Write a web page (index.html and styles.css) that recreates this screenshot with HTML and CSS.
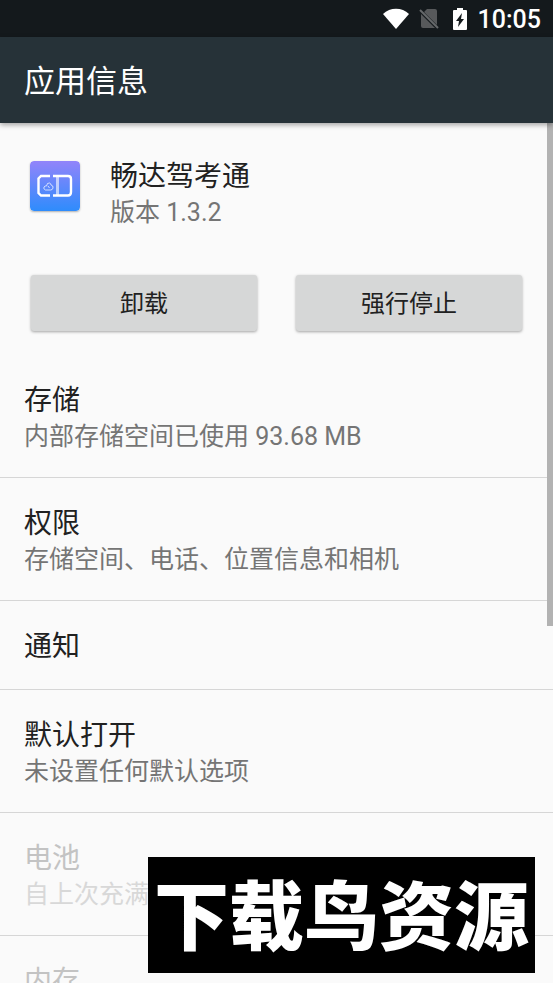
FILE: index.html
```html
<!DOCTYPE html>
<html lang="zh-CN">
<head>
<meta charset="utf-8">
<meta name="viewport" content="width=device-width, initial-scale=1">
<title>应用信息</title>
<link rel="stylesheet" href="styles.css">
</head>
<body>
<div class="statusbar">
  <svg class="wifi" viewBox="0 0 28 22" aria-hidden="true"><path d="M1 6C8-1 20-1 27 6L14 21Z" fill="#fff"/></svg>
  <svg class="sim" viewBox="0 0 22 22" aria-hidden="true"><path d="M9 1H17Q19 1 19 3V17L6 4ZM3 6L17 20H5Q3 20 3 18Z" fill="#57595b"/><path d="M2 2L20 20" stroke="#66696b" stroke-width="2"/></svg>
  <svg class="battery" viewBox="0 0 16 22" aria-hidden="true"><path d="M5 0H11V2H14Q15 2 15 3V21Q15 22 14 22H2Q1 22 1 21V3Q1 2 2 2H5Z" fill="#fff"/><path d="M10 5L4 13H7L6 19L12 11H9Z" fill="#14191c"/></svg>
  <time class="clock">10:05</time>
</div>
<header class="appbar"><h1>应用信息</h1></header>
<main class="content">
  <section class="app">
    <svg class="app-icon" viewBox="0 0 50 50" aria-hidden="true">
      <defs><linearGradient id="tile" x1="0" y1="0" x2="0" y2="1"><stop offset="0" stop-color="#9284fa"/><stop offset="1" stop-color="#2e8cfc"/></linearGradient></defs>
      <rect width="50" height="50" rx="4" fill="url(#tile)"/>
      <path d="M20 15H11L8.500 17.500V32L11 34.500H20M23 15H38Q41 15 41 18V31Q41 34.500 38 34.500H23" fill="none" stroke="#fff" stroke-width="2.400"/>
      <path d="M27.500 16V34" stroke="#fff" stroke-width="3" stroke-opacity=".6"/>
      <path d="M15.500 29Q13 28 14 26Q15 24.500 16.500 25Q17 21.500 19.500 22Q21 22.500 21 24Q23.500 24.500 23 27Q22.500 29 20.500 29ZM18 25L19.500 27" fill="none" stroke="#fff" stroke-opacity=".7"/>
    </svg>
    <div>
      <h2 class="title">畅达驾考通</h2>
      <p class="summary">版本 1.3.2</p>
    </div>
  </section>
  <div class="actions">
    <button type="button">卸载</button>
    <button type="button">强行停止</button>
  </div>
  <ul class="settings">
    <li><a href="#storage"><span class="title">存储</span><span class="summary">内部存储空间已使用 93.68 MB</span></a></li>
    <li><a href="#permissions"><span class="title">权限</span><span class="summary">存储空间、电话、位置信息和相机</span></a></li>
    <li><a href="#notifications"><span class="title">通知</span></a></li>
    <li><a href="#defaults"><span class="title">默认打开</span><span class="summary">未设置任何默认选项</span></a></li>
    <li class="disabled"><a href="#battery"><span class="title">电池</span><span class="summary">自上次充满</span></a></li>
    <li class="disabled"><a href="#memory"><span class="title">内存</span></a></li>
  </ul>
  <div class="scroll-thumb"></div>
</main>
<div class="watermark">下载鸟资源</div>
</body>
</html>
```
FILE: styles.css
```css
* { box-sizing: border-box; }

body {
  margin: 0;
  height: 100vh;
  display: flex;
  flex-direction: column;
  position: relative;
  overflow: hidden;
  background: #fafafa;
  color: #212121;
  font-family: Roboto, "Noto Sans CJK SC", sans-serif;
}

h1, h2, p, ul { margin: 0; padding: 0; font-weight: 400; }

.statusbar {
  flex: none;
  height: 37px;
  padding: 0 12px;
  display: flex;
  align-items: center;
  justify-content: flex-end;
  background: #14191c;
  color: #fff;
}
.wifi { width: 28px; height: 22px; margin-right: 8px; }
.sim { width: 22px; height: 22px; margin-right: 12px; }
.battery { width: 16px; height: 22px; margin-right: 10px; }
.clock { padding-top: 2px; font-size: 25px; line-height: 37px; font-weight: 500; }

.appbar {
  flex: none;
  height: 86px;
  padding: 4px 24px 0;
  display: flex;
  align-items: center;
  position: relative;
  z-index: 1;
  background: #263238;
  color: #fff;
  box-shadow: 0 2px 5px rgba(0, 0, 0, .35);
}
.appbar h1 { font-size: 31px; line-height: 40px; }

.content {
  flex: 1;
  min-height: 0;
  position: relative;
  overflow: hidden;
}

.title { display: block; font-size: 28px; line-height: 38px; }
.summary { display: block; font-size: 25px; line-height: 34px; color: #757575; }

.app { display: flex; gap: 30px; padding: 35px 30px 0; }
.app-icon {
  width: 50px;
  height: 50px;
  margin-top: 3px;
  border-radius: 4px;
  box-shadow: 0 1px 2px rgba(0, 0, 0, .3);
}

.actions {
  display: grid;
  grid-template-columns: 1fr 1fr;
  gap: 39px;
  padding: 45px 31px 24px;
}
.actions button {
  height: 56px;
  padding: 0 0 3px;
  border: 0;
  border-radius: 3px;
  background: #d6d7d7;
  color: #212121;
  font: inherit;
  font-size: 24px;
  box-shadow: 0 1px 3px rgba(0, 0, 0, .35);
}

.settings { list-style: none; }
.settings li { border-bottom: 1px solid #d6d6d6; }
.settings a {
  display: block;
  padding: 27px 24px 23px;
  color: inherit;
  text-decoration: none;
}
.disabled .title { color: #c3c3c3; }
.disabled .summary { color: #d8d8d8; }

.scroll-thumb {
  position: absolute;
  top: 0;
  right: 0;
  width: 6px;
  height: 58.5%;
  background: #b2b2b2;
}

.watermark {
  position: absolute;
  right: 18px;
  bottom: 10px;
  z-index: 2;
  width: 70%;
  height: 116px;
  background: #000;
  color: #fff;
  font-family: "Noto Sans CJK SC", sans-serif;
  font-size: 75px;
  font-weight: 900;
  line-height: 110px;
  text-align: center;
  white-space: nowrap;
}
```
